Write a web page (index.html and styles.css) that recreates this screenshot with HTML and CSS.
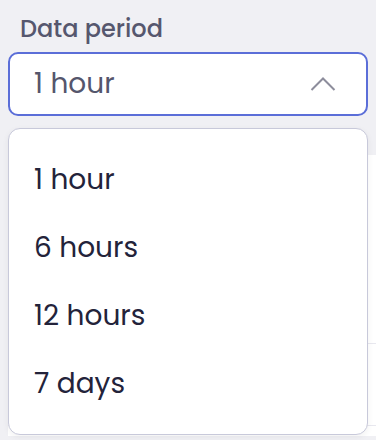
FILE: index.html
```html
<!DOCTYPE html>
<html lang="en">

<head>
    <meta charset="UTF-8">
    <meta name="viewport" content="width=device-width, initial-scale=1.0">
    <title>Data period</title>
    <link rel="stylesheet" href="styles.css">
</head>

<body>
    <div class="field">
        <label class="field-label" for="periodo">Data period</label>
        <div class="select-wrap">
            <div class="select" id="periodo">
                <span class="select-value">1 hour</span>
                <svg class="chevron" width="26" height="14" viewBox="0 0 26 14">
                    <polyline points="1.5,13 13,1.5 24.5,13" fill="none" stroke="#8d8d9c" stroke-width="2" />
                </svg>
            </div>
            <ul class="dropdown">
                <li>1 hour</li>
                <li>6 hours</li>
                <li>12 hours</li>
                <li>7 days</li>
            </ul>
        </div>
    </div>

    <!-- tabela atrás do menu -->
    <div class="panel">
        <div class="panel-row row-tall"></div>
        <div class="panel-row row-short"></div>
        <div class="panel-row row-end"></div>
    </div>
</body>

</html>
```
FILE: styles.css
```css
* {
    box-sizing: border-box;
    margin: 0;
    padding: 0;
    font-family: 'Poppins', 'Inter', sans-serif;
}

html,
body {
    height: 440px;
    overflow: hidden;
}

body {
    background-color: #f0f0f4;
    padding: 17px 8px 0 8px;
}

.field-label {
    display: block;
    font-size: 24px;
    font-weight: 500;
    line-height: 24px;
    color: #56576e;
    padding-left: 12px;
    margin-bottom: 11px;
}

.select-wrap {
    position: relative;
}

.select {
    height: 64px;
    background-color: #fff;
    border: 2px solid #5b6ed8;
    border-radius: 10px;
    display: flex;
    align-items: center;
    justify-content: space-between;
    padding: 0 30px 0 24px;
}

.select-value {
    font-size: 28px;
    color: #55566c;
}

.chevron {
    display: block;
}

.dropdown {
    position: absolute;
    top: 76px;
    left: 0;
    right: 0;
    z-index: 2;
    list-style: none;
    background-color: #fff;
    border: 1px solid #c8c9da;
    border-radius: 12px;
    box-shadow: 0px 2px 6px rgba(0, 0, 0, 0.06);
    padding: 17px 0 16px 0;
}

.dropdown li {
    height: 68px;
    line-height: 68px;
    font-size: 28px;
    color: #23233a;
    padding-left: 25px;
}

.panel {
    margin-top: 39px;
    margin-right: -20px;
    background-color: #fff;
}

.panel-row {
    border-bottom: 1px solid #e8e8ef;
    height: 82px;
}

.row-tall {
    height: 189px;
}

.row-end {
    height: 10px;
    border-bottom: none;
}
```
